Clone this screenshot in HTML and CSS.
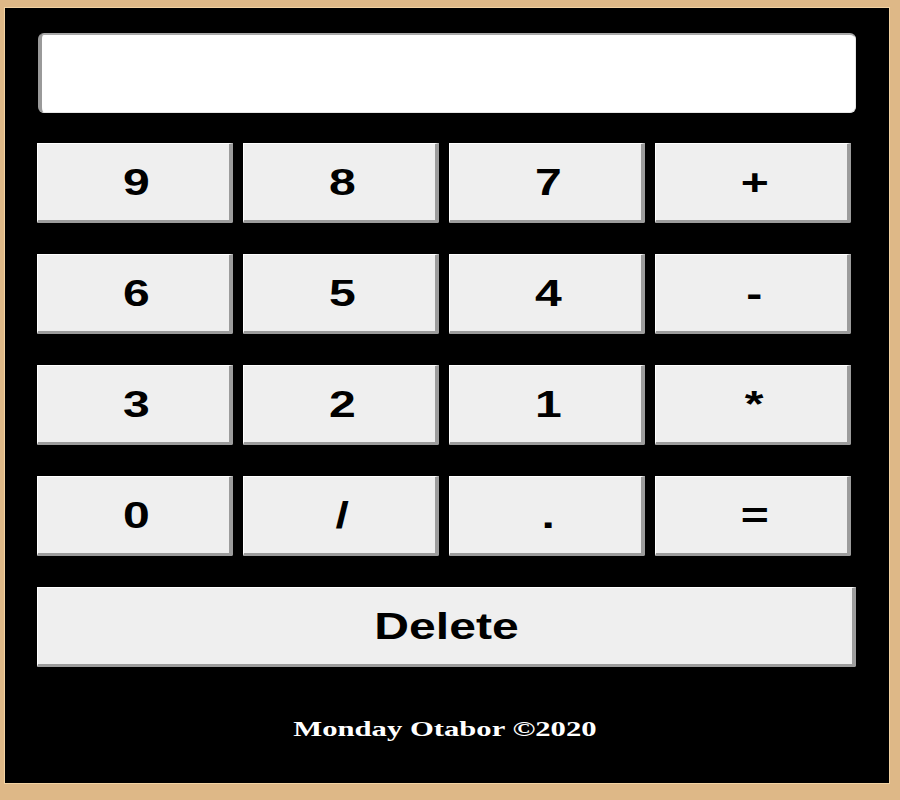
FILE: index.html
```html
<!DOCTYPE html>
<html>
<head>
<meta charset="utf-8">
<title>Calculator</title>
<link rel="stylesheet" href="styles.css">
</head>
<body>
<div class="calc">
  <div class="display"></div>
  <div class="keys">
    <button class="key"><span class="lbl">9</span></button>
    <button class="key"><span class="lbl">8</span></button>
    <button class="key"><span class="lbl">7</span></button>
    <button class="key"><span class="lbl">+</span></button>
    <button class="key"><span class="lbl">6</span></button>
    <button class="key"><span class="lbl">5</span></button>
    <button class="key"><span class="lbl">4</span></button>
    <button class="key"><span class="lbl">-</span></button>
    <button class="key"><span class="lbl">3</span></button>
    <button class="key"><span class="lbl">2</span></button>
    <button class="key"><span class="lbl">1</span></button>
    <button class="key"><span class="lbl">*</span></button>
    <button class="key"><span class="lbl">0</span></button>
    <button class="key"><span class="lbl">/</span></button>
    <button class="key"><span class="lbl">.</span></button>
    <button class="key"><span class="lbl">=</span></button>
  </div>
  <button class="key delete"><span class="lbl">Delete</span></button>
  <p class="footer"><span class="flbl">Monday Otabor ©2020</span></p>
</div>
</body>
</html>
```
FILE: styles.css
```css
html, body {
  margin: 0;
  padding: 0;
}
body {
  background: #deb887;
  padding: 8px 11px 0 5px;
  height: 800px;
  box-sizing: border-box;
}
.calc {
  background: #000;
  height: 775px;
  box-sizing: border-box;
  padding: 25px 32px 0 32px;
  outline: 1px solid #f2d2a2;
}
.display {
  width: 818px;
  height: 80px;
  margin-left: 1px;
  box-sizing: border-box;
  background: #fff;
  border-radius: 6px;
  border-top: 2px solid #a8a8a8;
  border-left: 4px solid #9a9a9a;
  border-right: 1px solid #e6e6e6;
  border-bottom: 1px solid #e6e6e6;
}
.keys {
  display: grid;
  grid-template-columns: repeat(4, 196px);
  grid-auto-rows: 80px;
  column-gap: 10px;
  row-gap: 31px;
  margin-top: 30px;
}
.key {
  display: flex;
  align-items: center;
  justify-content: center;
  margin: 0;
  padding: 0 0 0 6px;
  background: #efefef;
  box-sizing: border-box;
  border-top: 1px solid #ffffff;
  border-left: 1px solid #ffffff;
  border-right: 4px solid #9c9c9c;
  border-bottom: 3px solid #9c9c9c;
  border-radius: 0 1px 2px 1px;
  font-family: "Liberation Sans", Arial, sans-serif;
  font-weight: bold;
  font-size: 37px;
  color: #000;
}
.lbl {
  display: inline-block;
  transform: scaleX(1.3);
  position: relative;
  top: 1px;
}
.delete {
  width: 819px;
  height: 80px;
  margin-top: 31px;
  padding-left: 4px;
}
.footer {
  margin: 50px 0 0 0;
  text-align: center;
  color: #fff;
  font-family: "Liberation Serif", "Times New Roman", serif;
  font-weight: bold;
  font-size: 21px;
  padding-right: 4px;
}
.flbl {
  display: inline-block;
  transform: scaleX(1.46);
}
```
